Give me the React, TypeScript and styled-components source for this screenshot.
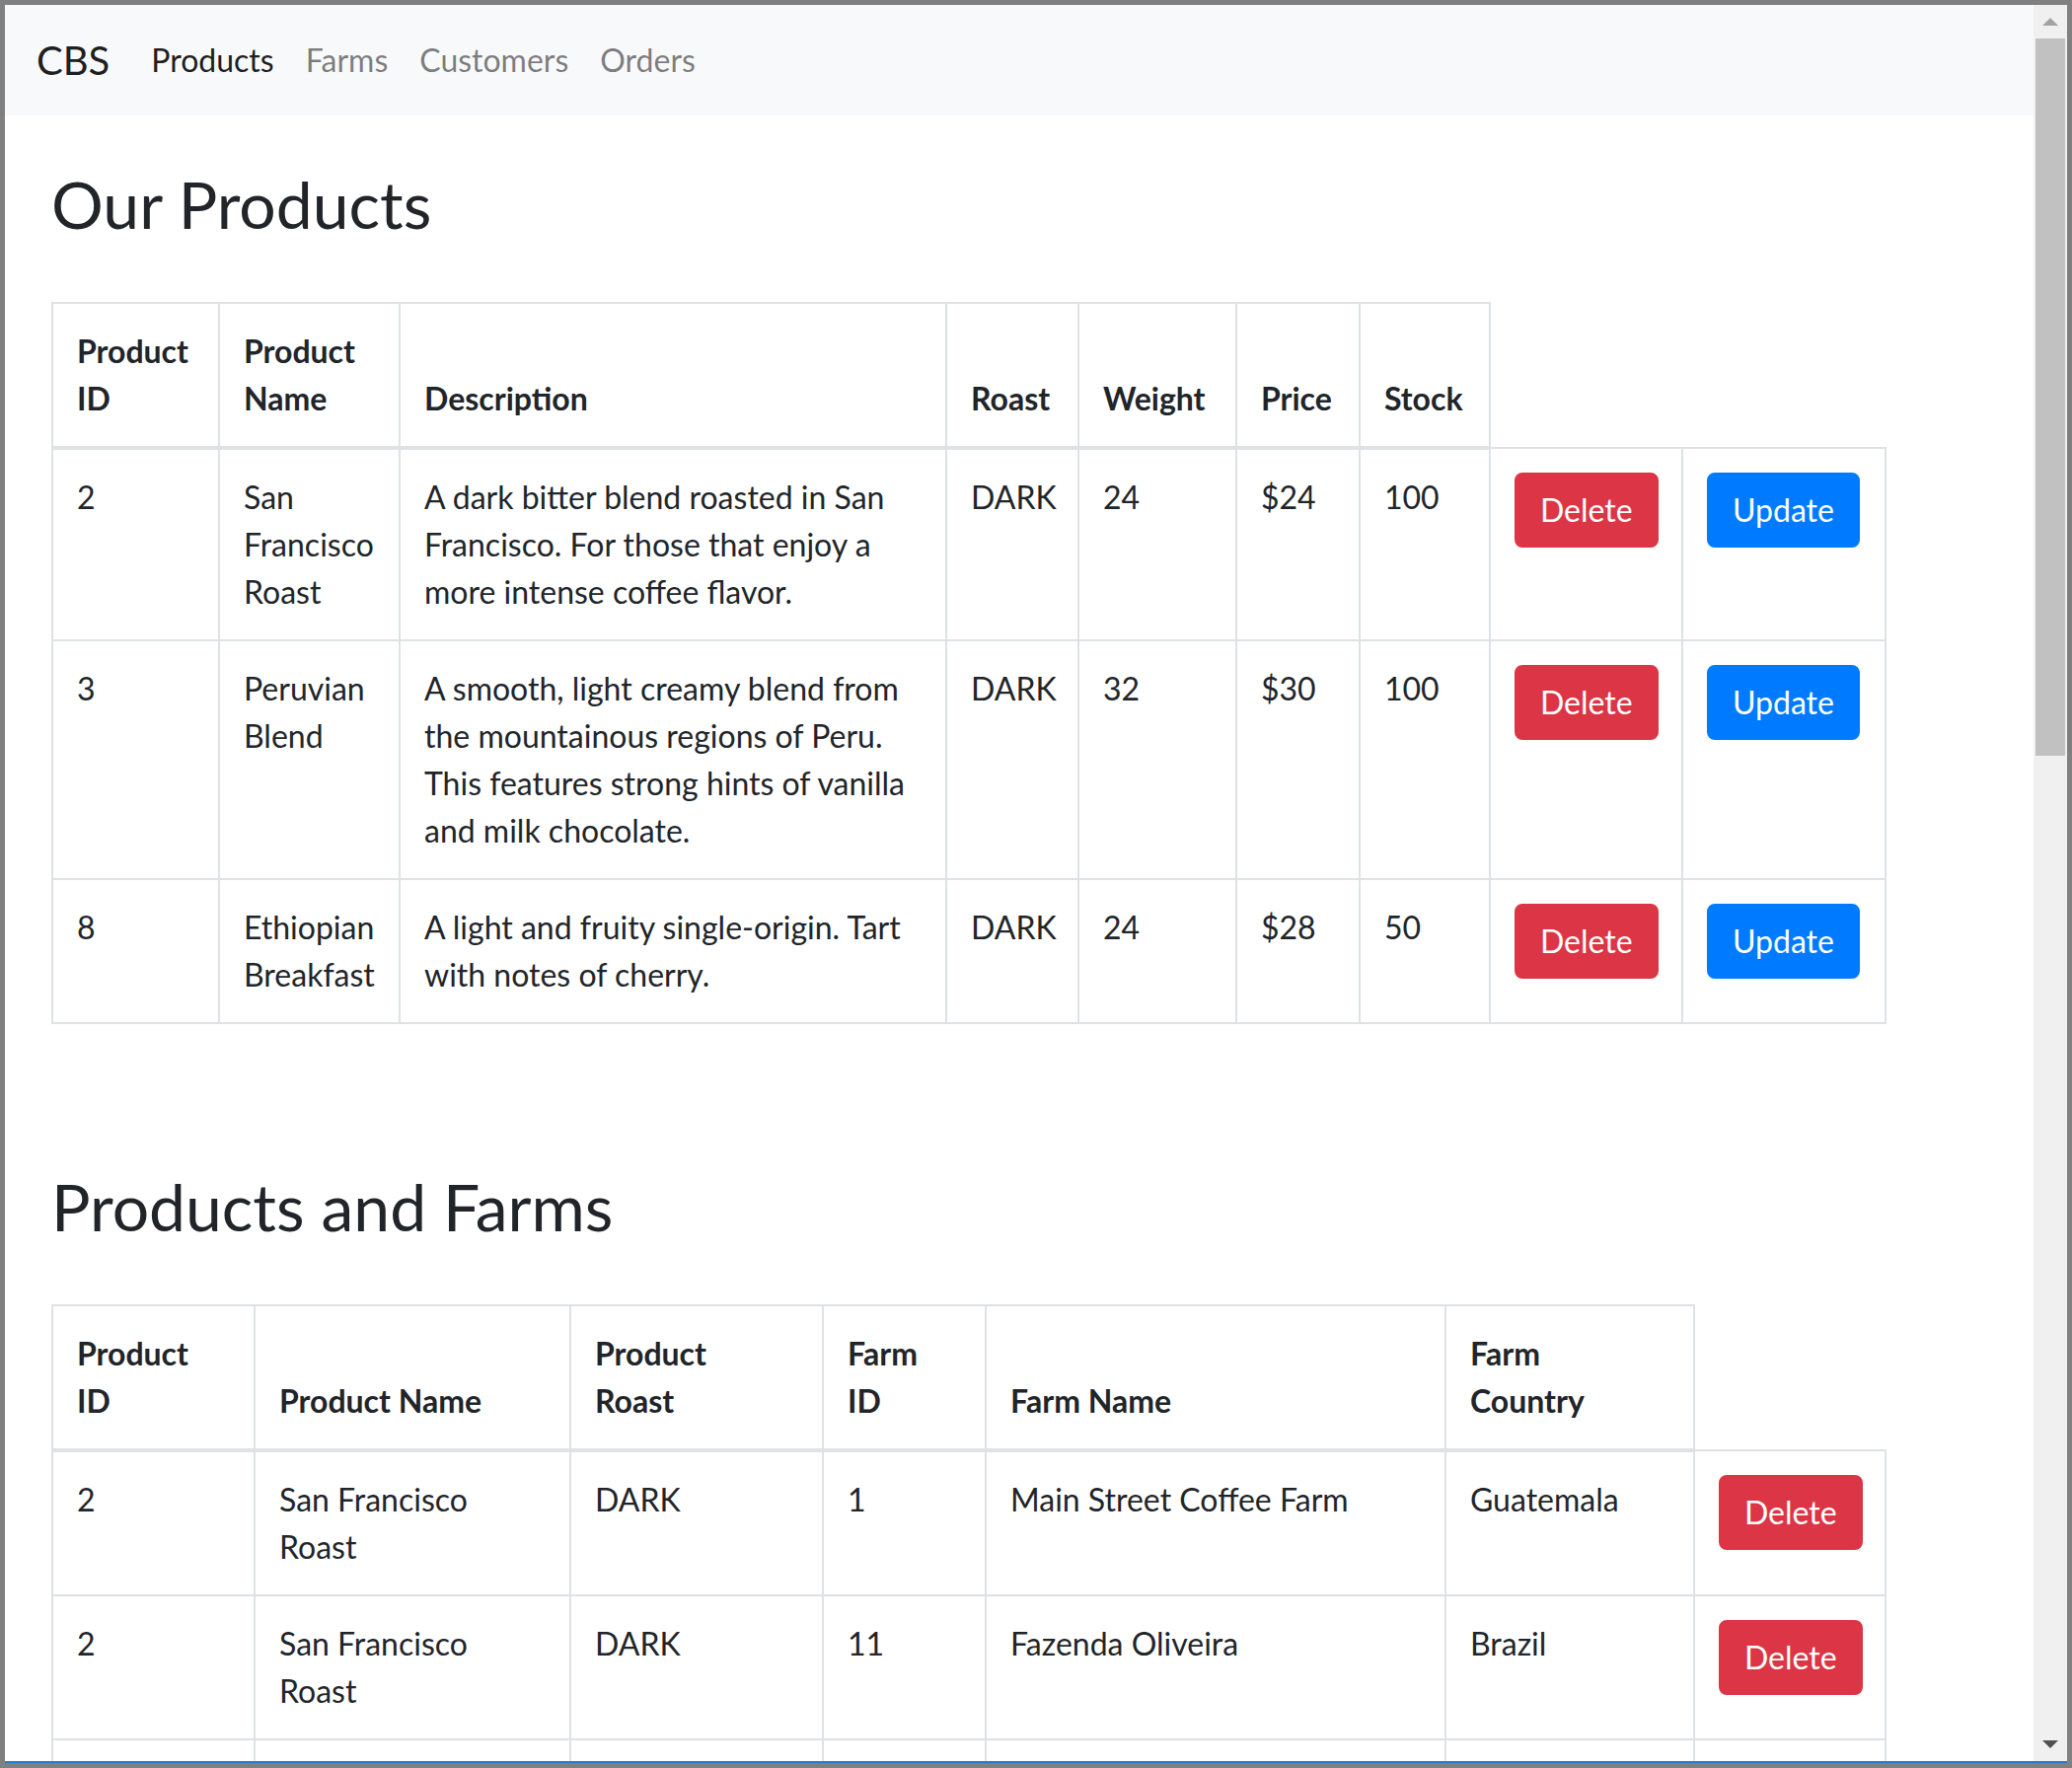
import React from 'react';
import styled, { createGlobalStyle } from 'styled-components';

const GlobalStyle = createGlobalStyle`
  html, body {
    margin: 0;
    padding: 0;
    background: #808080;
  }
  body {
    font-family: Lato, "Noto Sans", "Liberation Sans", sans-serif;
    color: #212529;
  }
  * { box-sizing: border-box; }
`;

const Frame = styled.div`
  width: 2100px;
  height: 1792px;
  background: #808080;
  padding: 5px 5px 5px 5px;
  display: flex;
  flex-direction: column;
`;

const Window = styled.div`
  flex: 1;
  min-height: 0;
  display: flex;
  border-bottom: 2px solid #2a78c8;
`;

const Viewport = styled.div`
  flex: 1;
  min-width: 0;
  background: #ffffff;
  overflow: hidden;
`;

const Scrollbar = styled.div`
  width: 34px;
  background: #f0f0f0;
  display: flex;
  flex-direction: column;
  align-items: center;
`;

const ScrollButton = styled.div`
  width: 34px;
  height: 34px;
  display: flex;
  align-items: center;
  justify-content: center;
`;

const Thumb = styled.div`
  width: 30px;
  height: 727px;
  background: #c1c1c1;
`;

const Track = styled.div`
  flex: 1;
`;

const Navbar = styled.nav`
  height: 112px;
  background: #f8f9fa;
  padding: 16px 32px;
  display: flex;
  align-items: center;
`;

const Brand = styled.span`
  font-size: 40px;
  line-height: 60px;
  padding: 10px 0;
  margin-right: 26px;
  color: rgba(0, 0, 0, 0.9);
`;

const NavLink = styled.span<{ $active?: boolean }>`
  font-size: 32px;
  line-height: 48px;
  padding: 16px;
  color: ${(p) => (p.$active ? 'rgba(0, 0, 0, 0.9)' : 'rgba(0, 0, 0, 0.5)')};
`;

const Main = styled.main`
  padding: 50px 47px 0;
`;

const Section = styled.section<{ $gap?: number }>`
  margin-top: ${(p) => p.$gap ?? 0}px;
`;

const Heading = styled.h1`
  margin: 0;
  font-size: 66px;
  line-height: 79px;
  font-weight: 400;
  color: #212529;
`;

const Table = styled.table`
  margin-top: 60px;
  width: 1858px;
  table-layout: fixed;
  border-collapse: collapse;
  font-size: 32px;
  line-height: 48px;
  color: #212529;
`;

const Th = styled.th`
  padding: 24px;
  border: 2px solid #dee2e6;
  border-bottom-width: 4px;
  text-align: left;
  vertical-align: bottom;
  font-weight: 700;
`;

const Td = styled.td`
  padding: 24px;
  border: 2px solid #dee2e6;
  vertical-align: top;
  text-align: left;
`;

const Button = styled.button<{ $variant: 'danger' | 'primary' }>`
  display: inline-block;
  font-family: inherit;
  font-size: 32px;
  line-height: 48px;
  padding: 12px 24px;
  border-radius: 8px;
  border: 2px solid ${(p) => (p.$variant === 'danger' ? '#dc3545' : '#007bff')};
  background: ${(p) => (p.$variant === 'danger' ? '#dc3545' : '#007bff')};
  color: #ffffff;
  cursor: pointer;
`;

type Product = {
  id: number;
  name: string;
  description: string;
  roast: string;
  weight: number;
  price: string;
  stock: number;
};

const products: Product[] = [
  {
    id: 2,
    name: 'San Francisco Roast',
    description:
      'A dark bitter blend roasted in San Francisco. For those that enjoy a more intense coffee flavor.',
    roast: 'DARK',
    weight: 24,
    price: '$24',
    stock: 100,
  },
  {
    id: 3,
    name: 'Peruvian Blend',
    description:
      'A smooth, light creamy blend from the mountainous regions of Peru. This features strong hints of vanilla and milk chocolate.',
    roast: 'DARK',
    weight: 32,
    price: '$30',
    stock: 100,
  },
  {
    id: 8,
    name: 'Ethiopian Breakfast',
    description: 'A light and fruity single-origin. Tart with notes of cherry.',
    roast: 'DARK',
    weight: 24,
    price: '$28',
    stock: 50,
  },
];

type ProductFarm = {
  productId: number;
  productName: string;
  roast: string;
  farmId: number;
  farmName: string;
  country: string;
};

const productFarms: ProductFarm[] = [
  { productId: 2, productName: 'San Francisco Roast', roast: 'DARK', farmId: 1, farmName: 'Main Street Coffee Farm', country: 'Guatemala' },
  { productId: 2, productName: 'San Francisco Roast', roast: 'DARK', farmId: 11, farmName: 'Fazenda Oliveira', country: 'Brazil' },
];

const productCols = [169, 183, 554, 134, 160, 125, 132, 195, 206];
const farmCols = [205, 320, 256, 165, 466, 252, 194];

const UpArrow = () => (
  <svg width="16" height="8" viewBox="0 0 16 8">
    <polygon points="0,8 8,0 16,8" fill="#a3a3a3" />
  </svg>
);

const DownArrow = () => (
  <svg width="16" height="8" viewBox="0 0 16 8">
    <polygon points="0,0 16,0 8,8" fill="#505050" />
  </svg>
);

export default function App() {
  return (
    <>
      <GlobalStyle />
      <Frame>
        <Window>
          <Viewport>
            <Navbar>
              <Brand>CBS</Brand>
              <NavLink $active>Products</NavLink>
              <NavLink>Farms</NavLink>
              <NavLink>Customers</NavLink>
              <NavLink>Orders</NavLink>
            </Navbar>
            <Main>
              <Section>
                <Heading>Our Products</Heading>
                <Table>
                  <colgroup>
                    {productCols.map((w, i) => (
                      <col key={i} style={{ width: w }} />
                    ))}
                  </colgroup>
                  <thead>
                    <tr>
                      <Th>Product<br />ID</Th>
                      <Th>Product<br />Name</Th>
                      <Th>Description</Th>
                      <Th>Roast</Th>
                      <Th>Weight</Th>
                      <Th>Price</Th>
                      <Th>Stock</Th>
                    </tr>
                  </thead>
                  <tbody>
                    {products.map((p) => (
                      <tr key={p.id}>
                        <Td>{p.id}</Td>
                        <Td>{p.name}</Td>
                        <Td>{p.description}</Td>
                        <Td>{p.roast}</Td>
                        <Td>{p.weight}</Td>
                        <Td>{p.price}</Td>
                        <Td>{p.stock}</Td>
                        <Td>
                          <Button $variant="danger">Delete</Button>
                        </Td>
                        <Td>
                          <Button $variant="primary">Update</Button>
                        </Td>
                      </tr>
                    ))}
                  </tbody>
                </Table>
              </Section>
              <Section $gap={145}>
                <Heading>Products and Farms</Heading>
                <Table>
                  <colgroup>
                    {farmCols.map((w, i) => (
                      <col key={i} style={{ width: w }} />
                    ))}
                  </colgroup>
                  <thead>
                    <tr>
                      <Th>Product<br />ID</Th>
                      <Th>Product Name</Th>
                      <Th>Product<br />Roast</Th>
                      <Th>Farm<br />ID</Th>
                      <Th>Farm Name</Th>
                      <Th>Farm<br />Country</Th>
                    </tr>
                  </thead>
                  <tbody>
                    {productFarms.map((r, i) => (
                      <tr key={i}>
                        <Td>{r.productId}</Td>
                        <Td>{r.productName}</Td>
                        <Td>{r.roast}</Td>
                        <Td>{r.farmId}</Td>
                        <Td>{r.farmName}</Td>
                        <Td>{r.country}</Td>
                        <Td>
                          <Button $variant="danger">Delete</Button>
                        </Td>
                      </tr>
                    ))}
                    <tr>
                      {farmCols.map((_, i) => (
                        <Td key={i} />
                      ))}
                    </tr>
                  </tbody>
                </Table>
              </Section>
            </Main>
          </Viewport>
          <Scrollbar>
            <ScrollButton>
              <UpArrow />
            </ScrollButton>
            <Thumb />
            <Track />
            <ScrollButton>
              <DownArrow />
            </ScrollButton>
          </Scrollbar>
        </Window>
      </Frame>
    </>
  );
}
